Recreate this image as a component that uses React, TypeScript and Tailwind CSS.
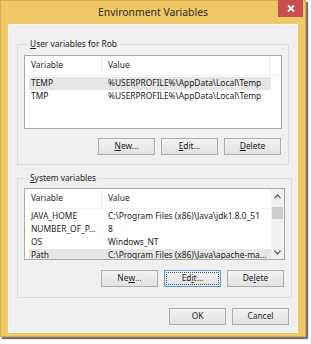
import React from "react";

const font = { fontFamily: '"Noto Sans", "Open Sans", sans-serif' };

function U({ children }: { children: React.ReactNode }) {
  return <span className="underline underline-offset-[1px]">{children}</span>;
}

function Btn({
  children,
  focused,
}: {
  children: React.ReactNode;
  focused?: boolean;
}) {
  return (
    <div
      className={
        "w-[57px] h-[17px] flex items-center justify-center border bg-linear-to-b from-[#f3f3f3] to-[#e2e2e2] text-[8.4px] leading-none text-[#1b1b1b] " +
        (focused ? "border-[#5b9fdf]" : "border-[#adadad]")
      }
    >
      {focused ? (
        <div className="w-[51px] h-[11px] flex items-center justify-center outline-1 outline-dotted outline-[#555]">
          {children}
        </div>
      ) : (
        children
      )}
    </div>
  );
}

interface Row {
  name: string;
  value: string;
  selected?: boolean;
}

const userRows: Row[] = [
  { name: "TEMP", value: "%USERPROFILE%\\AppData\\Local\\Temp", selected: true },
  { name: "TMP", value: "%USERPROFILE%\\AppData\\Local\\Temp" },
];

const systemRows: Row[] = [
  { name: "JAVA_HOME", value: "C:\\Program Files (x86)\\Java\\jdk1.8.0_51" },
  { name: "NUMBER_OF_P...", value: "8" },
  { name: "OS", value: "Windows_NT" },
  {
    name: "Path",
    value: "C:\\Program Files (x86)\\Java\\apache-ma...",
    selected: true,
  },
];

function Header({ filler }: { filler: boolean }) {
  return (
    <div className="flex h-[20px] shrink-0 text-[8.4px] text-[#2a2a2a] border-b border-[#f2f2f2]">
      <div className="w-[77px] shrink-0 flex items-center pl-[6px] border-r border-[#e8e8e8]">
        Variable
      </div>
      <div
        className={
          "flex items-center pl-[6px] " +
          (filler ? "w-[168px] shrink-0 border-r border-[#e8e8e8]" : "flex-1")
        }
      >
        Value
      </div>
    </div>
  );
}

function Rows({ rows }: { rows: Row[] }) {
  return (
    <div className="flex flex-col pt-[1px]">
      {rows.map((r) => (
        <div
          key={r.name}
          className={
            "flex h-[13px] w-[242px] ml-[4px] items-center text-[8.4px] text-[#1b1b1b] whitespace-nowrap" +
            (r.selected ? " bg-[#e6e6e6]" : "")
          }
        >
          <div className="w-[73px] shrink-0 pl-[2px] overflow-hidden">{r.name}</div>
          <div className="pl-[6px] overflow-hidden">{r.value}</div>
        </div>
      ))}
    </div>
  );
}

function Chevron({ up }: { up?: boolean }) {
  return (
    <svg width="7" height="5" viewBox="0 0 7 5">
      <path
        d={up ? "M0.5 4.2 L3.5 1 L6.5 4.2" : "M0.5 0.8 L3.5 4 L6.5 0.8"}
        fill="none"
        stroke="#606060"
        strokeWidth="1.3"
      />
    </svg>
  );
}

export default function App() {
  return (
    <div className="w-[311px] h-[344px] bg-white" style={font}>
      <div className="relative w-[306px] h-[337px] bg-[#efc764] border border-[#d9ad4a] shadow-[2px_2px_1px_rgba(0,0,0,0.55)] flex flex-col">
        {/* title bar */}
        <div className="h-[23px] shrink-0 flex items-center justify-center text-[10.4px] text-[#2b2b2b] pt-[1px]">
          Environment Variables
        </div>
        <div className="absolute top-[-1px] right-[2px] w-[25px] h-[17px] bg-[#c74f4f] flex items-center justify-center">
          <svg width="8" height="7" viewBox="0 0 8 7">
            <path d="M1 0.5 L7 6.5 M7 0.5 L1 6.5" stroke="white" strokeWidth="1.8" />
          </svg>
        </div>

        {/* client */}
        <div className="ml-[7px] w-[290px] h-[309px] bg-[#f0f0f0] border border-[#f9f9f9] flex flex-col px-[8px] pt-[13px]">
          <fieldset className="border border-[#dcdcdc] px-[6px] pb-[9px] text-[8.4px] text-[#1b1b1b]">
            <legend className="ml-[4px] px-[2px] leading-[12px]">
              <U>U</U>ser variables for Rob
            </legend>
            <div className="mt-[5px] h-[74px] bg-white border border-[#a9a9a9] flex flex-col overflow-hidden">
              <Header filler />
              <Rows rows={userRows} />
            </div>
            <div className="mt-[9px] flex justify-end gap-[6px] pr-[1px]">
              <Btn>
                <U>N</U>ew...
              </Btn>
              <Btn>
                <U>E</U>dit...
              </Btn>
              <Btn>
                <U>D</U>elete
              </Btn>
            </div>
          </fieldset>

          <fieldset className="mt-[7px] border border-[#dcdcdc] px-[6px] pb-[10px] text-[8.4px] text-[#1b1b1b]">
            <legend className="ml-[4px] px-[2px] leading-[12px]">
              <U>S</U>ystem variables
            </legend>
            <div className="mt-[4px] h-[72px] bg-white border border-[#a9a9a9] flex overflow-hidden">
              <div className="flex-1 flex flex-col min-w-0">
                <Header filler={false} />
                <Rows rows={systemRows} />
              </div>
              <div className="w-[13px] shrink-0 bg-[#f0f0f0] flex flex-col items-center">
                <div className="h-[14px] flex items-center">
                  <Chevron up />
                </div>
                <div className="mt-[4px] w-[11px] h-[12px] bg-[#cdcdcd]" />
                <div className="flex-1" />
                <div className="h-[14px] flex items-center">
                  <Chevron />
                </div>
              </div>
            </div>
            <div className="mt-[10px] flex justify-end gap-[6px] pr-[1px]">
              <Btn>
                Ne<U>w</U>...
              </Btn>
              <Btn focused>
                Ed<U>i</U>t...
              </Btn>
              <Btn>
                De<U>l</U>ete
              </Btn>
            </div>
          </fieldset>

          <div className="mt-[10px] flex justify-end gap-[6px]">
            <Btn>OK</Btn>
            <Btn>Cancel</Btn>
          </div>
        </div>
      </div>
    </div>
  );
}
